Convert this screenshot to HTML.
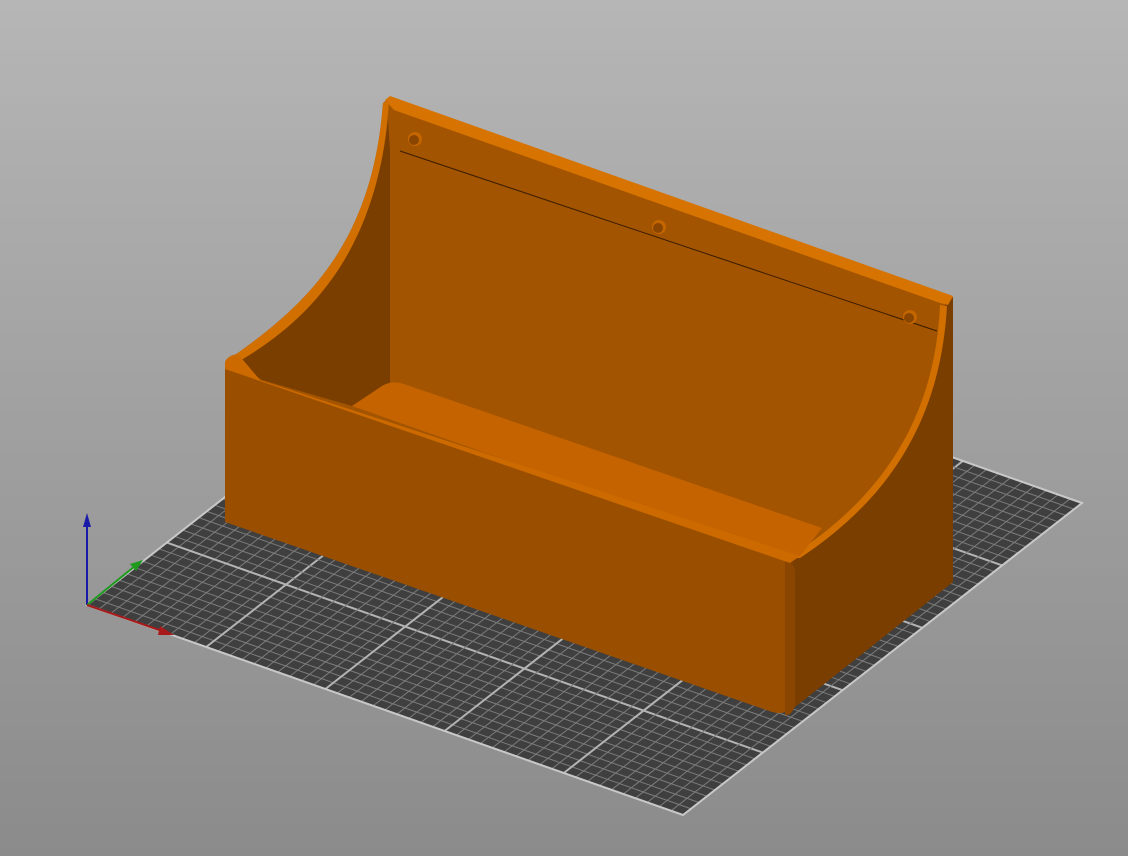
<!DOCTYPE html>
<html><head><meta charset="utf-8"><style>
html,body{margin:0;padding:0;width:1128px;height:856px;overflow:hidden}
body{background:linear-gradient(#b6b6b6,#a2a2a2 45%,#8b8b8b)}
svg{position:absolute;left:0;top:0}
</style></head><body>
<svg width="1128" height="856" viewBox="0 0 1128 856" xmlns="http://www.w3.org/2000/svg">
<g id="bed">
<polygon points="87,605 683,815 1082,503 486,293" fill="#3f3f3f"/>
<g id="grid" transform="matrix(596,210,399,-312,87,605)"></g>
<polygon points="87,605 683,815 1082,503 486,293" fill="none" stroke="#c8c8c8" stroke-width="2"/>
</g>
<!-- axes -->
<line x1="87" y1="605" x2="87" y2="525" stroke="#1a1aa8" stroke-width="2"/>
<polygon points="87,513 83,527 91,527" fill="#1a1aa8"/>
<line x1="87" y1="605" x2="135" y2="566" stroke="#1e9a1e" stroke-width="2"/>
<polygon points="143,560 130,564 136,571" fill="#1e9a1e"/>
<line x1="87" y1="605" x2="162" y2="631" stroke="#a81a1a" stroke-width="2"/>
<polygon points="174,635 160,626 158,635" fill="#a81a1a"/>
<!-- overall inner back / silhouette -->
<path d="M225,362 C300,310 372,250 383,103 L390,97 L953,297 L953,330 L945,310 C935,420 880,500 790,560 L800,575 L225,385 Z" fill="#a25400"/>
<!-- right side face -->
<path d="M788,560 C880,500 935,420 945,305 L953,298 L953,582 L785,715 Z" fill="#7a3e00"/>
<!-- back wall top strip -->
<polygon points="385,100 390,96 953,296 948,305 940,303 394,110" fill="#d77300"/>
<line x1="400" y1="151" x2="937" y2="331" stroke="#3a1c00" stroke-width="1"/>
<!-- holes -->
<circle cx="415" cy="139" r="7" fill="#c46600"/><circle cx="414" cy="140" r="5" fill="#8a4600"/>
<circle cx="659" cy="227" r="7" fill="#c46600"/><circle cx="658" cy="228" r="5" fill="#8a4600"/>
<circle cx="910" cy="317" r="7" fill="#c46600"/><circle cx="909" cy="318" r="5" fill="#8a4600"/>
<!-- left inner wall -->
<path d="M236,362 C305,315 375,255 388,118 L390,150 L390,383 L352,406 L262,380 Z" fill="#7a3e00"/>
<!-- left curved rim -->
<path d="M225,362 C300,310 372,250 383,103 L389,100 C380,250 310,320 238,362 Z" fill="#d17000"/>
<!-- right curved rim -->
<path d="M788,558 C880,500 935,420 940,305 L947,306 C940,430 880,505 800,558 Z" fill="#d17000"/>
<!-- floor -->
<path d="M352,406 L382,386 Q392,380 404,384 L822,528 L800,556 L790,560 Z" fill="#c46300"/>
<!-- front face -->
<path d="M225,368 L790,562 L790,705 Q788,716 772,712 L225,522 Z" fill="#9a4f00"/>
<path d="M785,560 Q792,560 795,570 L795,705 Q792,716 785,715 Z" fill="#8a4600"/>
<!-- front top rim -->
<path d="M225,362 Q228,355 238,354 L260,380 L800,556 L790,563 L225,369 Z" fill="#cc6a00"/>
</svg>
<script>
var g=document.getElementById('grid'),h='';
for(var i=1;i<50;i++){var t=i/50,maj=i%10==0;
var c=maj?'#b4b4b4':'#7c7c7c',w=maj?2:1;
h+='<line x1="'+t+'" y1="0" x2="'+t+'" y2="1" stroke="'+c+'" stroke-width="'+w+'" vector-effect="non-scaling-stroke"/>';
h+='<line x1="0" y1="'+t+'" x2="1" y2="'+t+'" stroke="'+c+'" stroke-width="'+w+'" vector-effect="non-scaling-stroke"/>';}
g.innerHTML=h;
</script>
</body></html>
